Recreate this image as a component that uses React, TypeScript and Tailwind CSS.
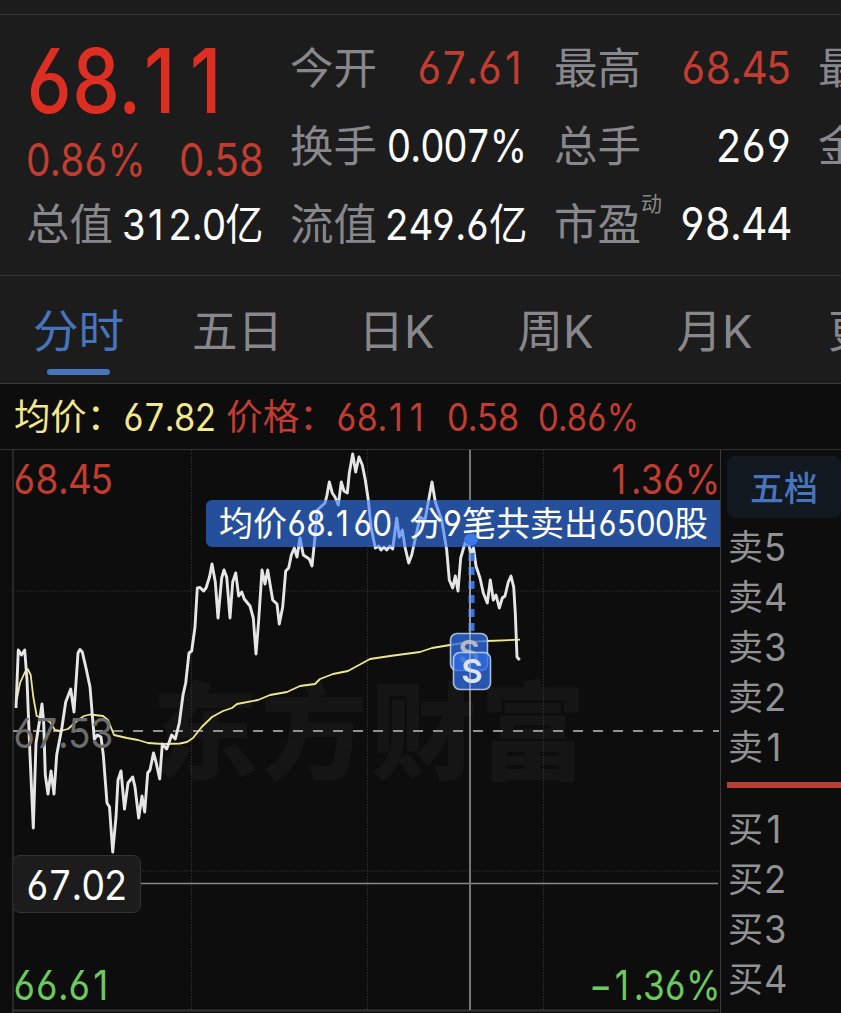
import { useLayoutEffect, useRef, useState, type ReactNode } from "react";
import clsx from "clsx";

const font = "font-['Inter','Noto_Sans_CJK_SC',sans-serif]";
const openDigits = "[font-feature-settings:'cv03','cv04']";

/** Single line of text condensed horizontally so that it fills its box. */
function Fit({ children, className }: { children: ReactNode; className: string }) {
  const box = useRef<HTMLDivElement>(null);
  const ref = useRef<HTMLSpanElement>(null);
  const [scale, setScale] = useState(1);
  useLayoutEffect(() => {
    if (box.current && ref.current) setScale(box.current.clientWidth / ref.current.offsetWidth);
  }, []);
  return (
    <div ref={box} className={clsx("shrink-0 whitespace-nowrap", className)}>
      <span ref={ref} className="inline-block origin-left" style={{ transform: `scaleX(${scale})` }}>
        {children}
      </span>
    </div>
  );
}

/** Digits on an even pitch, with a narrow decimal point. */
function Digits({ value }: { value: string }) {
  return (
    <>
      {value.split("").map((c, i) => (
        <span
          key={i}
          className={clsx(
            "inline-block text-center",
            c >= "0" && c <= "9" && "w-[0.61em]",
            c === "1" && "pr-[0.06em]",
            c === "." && "w-[0.27em]",
          )}
        >
          {c}
        </span>
      ))}
    </>
  );
}

function Stat({ label, sup, value, width, tone = "text-white", size = "text-[45px]" }: {
  label: string; sup?: string; value?: string; width?: string; tone?: string; size?: string;
}) {
  return (
    <div className="flex h-[78px] items-center justify-between leading-[78px]">
      <span className="relative -ml-[1px] shrink-0 whitespace-nowrap text-[43.5px] font-normal text-[#88888c]">
        {label}
        {sup && <sup className="absolute -top-[20px] left-full text-[21px] leading-[78px]">{sup}</sup>}
      </span>
      {value && width && (
        <Fit className={clsx(width, tone, size)}>
          <Digits value={value} />
        </Fit>
      )}
    </div>
  );
}

const pricePoints =
  "16,708 18.3,650 21.5,655 24.7,650 27,680 30,755 33.3,828 36,743 40,718 42,704 43.7,723 45.3,775 48,794 51,771 54,794 56.7,755 62,727 65.7,702 70.7,689 74,712 78,653 80,649.5 82.3,652 86,668 90,687 94.3,739 97.5,735 101,737 103.3,755 107,803 109.5,807 112.7,852 116,817 118,780 121,771 124.5,809 128,783 132.7,777 135,787 138.7,818 142,796 144.7,812 147.7,773 150,770 153.5,753 156,762 159.7,779 162.3,744 166.7,749 171.7,735 175.3,739 179.3,723 183,695 185.7,683 189,653 191.7,651 195,627 197.3,588 200,587.5 203.5,591 206,588 209.5,577 212,564 215.3,582 218,618 221.7,578 224,570 226.7,577 230,618 232.7,582 235.7,573 238.7,596 241.7,592 244.3,599 250,606 253.3,618 256,654 258.7,620 262,570 265,584 267.7,570 272.7,600 277,604 279.3,624 282.7,607 285.7,571 288.7,568 291.3,555 294.3,548 297,557 300,538 303.3,555 309.3,559 312,566 314.7,540 317.3,510 325,503 327,495 329.3,482 332.3,493 335,497 338.3,505 341.3,482 344,491 347.3,493 349.3,473 352.7,454 355.7,472 359,457 362.3,465 365.3,480 368.3,500 371,527 375.3,548 378.7,546 381,550 384,547 386.7,550 390,546 392.7,549 396.7,518 399.3,537 402.3,530 405,547 408.7,563 411.7,555 415,540 420,517 425,520 428.3,502 432,482 435.3,502 441.7,520 446.7,550 449.3,580 452.7,588 455.3,576 458,591 460.7,558 465,543 469,545 470.5,553 473.5,548 476,566 480,578 483.3,593 487.3,603 490.3,580 493.3,600 496,595 499.3,608 502.3,598 505,596 508.3,582 511,576 513.7,587 515.3,613 517,657 519.7,660";

const averagePoints =
  "16.7,700 20,683 25,672 27.7,669 30.7,675 33.3,697 36.7,716 43,718 50,722 55,730 60,731 68,729 78,720 84,716 90,714.5 103,716 108,720 114,735 127,738 138,740 148,743 163,744 180,743.5 187,742 193,738 201.7,727 212,717 223,711 232,708 237,704 258,700 270,695 287,692 300,686 315,684 320,679 333,674 348,671 370,659 390,656 420,652 432,648 450,645 470,642 487,641 520,639.7";

function Marker({ x, y, letter }: { x: number; y: number; letter: string }) {
  return (
    <g transform={`translate(${x} ${y})`}>
      <rect width="37" height="37" rx="6.5" fill="#2f6ce0" fillOpacity="0.78" stroke="#c3d3f2" strokeOpacity="0.85" strokeWidth="1.6" />
      <text x="18.5" y="30.5" textAnchor="middle" fontSize="33" fontWeight="600" fill={letter} className="font-['Inter',sans-serif]">S</text>
    </g>
  );
}

function Chart() {
  return (
    <div className="relative h-[563px] w-[721px] shrink-0 overflow-hidden border-r border-[#3a3a3a]">
      <svg width="720" height="563" viewBox="0 450 720 563" className="block">
        <defs>
          <linearGradient id="priceStroke" gradientUnits="userSpaceOnUse" x1="0" y1="450" x2="0" y2="550">
            <stop offset="0.5" stopColor="#e6e6e6" />
            <stop offset="0.5" stopColor="#7ba6f6" />
            <stop offset="0.97" stopColor="#7ba6f6" />
            <stop offset="0.97" stopColor="#e6e6e6" />
          </linearGradient>
        </defs>
        <text x="152" y="771" fontSize="106" fontWeight="900" textLength="434" fill="#151515" className="font-['Noto_Sans_CJK_SC',sans-serif]">东方财富</text>
        <path d="M13 450V1013" stroke="#292929" strokeWidth="2" />
        <path d="M12 1010.5H719" stroke="#343434" strokeWidth="2" />
        <path d="M191.5 450V1010M367.5 450V1010M543.5 450V1010M13 591H719M13 871H719" stroke="#303030" strokeDasharray="1.5 1.5" strokeWidth="1.2" />
        <path d="M13 731H719" stroke="#929292" strokeWidth="2" strokeDasharray="10 10" />
        <path d="M140 883.5H718" stroke="#8a8a8a" strokeWidth="1.4" />
        <path d="M470 450V1010" stroke="#777" strokeWidth="2" />
        <path d="M720 500H212a6 6 0 0 0-6 6V541a6 6 0 0 0 6 6H720Z" fill="#264f9b" />
        <polyline points={averagePoints} fill="none" stroke="#f1e68c" strokeWidth="1.8" strokeLinejoin="round" />
        <polyline points={pricePoints} fill="none" stroke="url(#priceStroke)" strokeWidth="2.9" strokeLinejoin="round" />
        <path d="M471.5 553V633" stroke="#3a73db" strokeWidth="6" strokeDasharray="8 6" />
        <ellipse cx="471" cy="539.5" rx="7" ry="6" fill="#3b78e8" />
        <Marker x={450.5} y={633.5} letter="#b4b8c2" />
        <Marker x={453.5} y={652.5} letter="#dfe3ec" />
        <path d="M470 547V690" stroke="#c8c8c8" strokeOpacity="0.45" strokeWidth="2" />
      </svg>
      <div className="absolute left-[13px] top-[6px] text-[41px] leading-[46px] text-[#c33c30]">
        <Fit className="w-[100px]"><Digits value="68.45" /></Fit>
      </div>
      <div className="absolute right-0 top-[6px] text-[41px] leading-[46px] text-[#c33c30]">
        <Fit className="w-[111px]"><Digits value="1.36%" /></Fit>
      </div>
      <div className="absolute left-[13px] top-[260px] text-[41px] leading-[46px] text-[#6c6c6c]">
        <Fit className="w-[100px]"><Digits value="67.53" /></Fit>
      </div>
      <div className="absolute left-[13px] top-[512px] text-[41px] leading-[46px] text-[#6cc95b]">
        <Fit className="w-[100px]"><Digits value="66.61" /></Fit>
      </div>
      <div className="absolute right-0 top-[512px] text-[41px] leading-[46px] text-[#6cc95b]">
        <Fit className="w-[131px]"><Digits value="−1.36%" /></Fit>
      </div>
      <div className="absolute left-[12px] top-[405px] flex h-[58px] w-[129px] items-center justify-center rounded-lg border border-[#333] bg-[#1c1c1c] pt-[2px] text-[41px] leading-none text-white">
        <Fit className="w-[101px]"><Digits value="67.02" /></Fit>
      </div>
      <div className="absolute left-[219px] top-[50px] flex text-[34px] leading-[47px] text-white">
        <Fit className="w-[68px]">均价</Fit>
        <Fit className="w-[104px] text-[36px]"><Digits value="68.160" /></Fit>
        <Fit className="ml-[18px] w-[34px]">分</Fit>
        <Fit className="w-[19px] text-[36px]">9</Fit>
        <Fit className="w-[136px]">笔共卖出</Fit>
        <Fit className="w-[76px] text-[36px]"><Digits value="6500" /></Fit>
        <Fit className="w-[34px]">股</Fit>
      </div>
    </div>
  );
}

function Level({ side, n }: { side: string; n: number }) {
  return (
    <div className="flex h-[50px] items-center gap-px pl-[7px] leading-[50px] text-[#929294]">
      <span className="text-[35px]">{side}</span>
      <Fit className="w-[22px] text-[38px]"><Digits value={String(n)} /></Fit>
    </div>
  );
}

const tabs = ["分时", "五日", "日K", "周K", "月K", "更多"];

export default function App() {
  return (
    <div className={clsx("flex h-[1013px] w-[841px] flex-col overflow-hidden bg-[#1c1c1c]", font, openDigits)}>
      <div className="h-[15px] shrink-0 border-b border-[#333]" />
      <section className="flex h-[261px] shrink-0 gap-[28px] border-b border-[#333] pl-[27px] pt-[14px]">
        <div className="w-[236px] shrink-0">
          <div className="h-[104px] text-[89px] font-[550] leading-[104px] text-[#dc2f22]">
            <Fit className="-ml-px w-[205px]"><Digits value="68.11" /></Fit>
          </div>
          <div className="flex h-[52px] justify-between text-[45px] leading-[54px] text-[#c33c30]">
            <Fit className="-ml-px w-[120px]"><Digits value="0.86%" /></Fit>
            <Fit className="w-[84px]"><Digits value="0.58" /></Fit>
          </div>
          <Stat label="总值" value="312.0亿" width="w-[141px]" size="text-[43px]" />
        </div>
        <div className="w-[236px] shrink-0">
          <Stat label="今开" value="67.61" width="w-[110px]" tone="text-[#c33c30]" />
          <Stat label="换手" value="0.007%" width="w-[140px]" />
          <Stat label="流值" value="249.6亿" width="w-[142px]" size="text-[43px]" />
        </div>
        <div className="w-[236px] shrink-0">
          <Stat label="最高" value="68.45" width="w-[110px]" tone="text-[#c33c30]" />
          <Stat label="总手" value="269" width="w-[75px]" />
          <Stat label="市盈" sup="动" value="98.44" width="w-[111px]" />
        </div>
        <div className="w-[236px] shrink-0">
          <Stat label="最低" />
          <Stat label="金额" />
        </div>
      </section>
      <nav className="-ml-px flex h-[108px] shrink-0 border-b border-[#3a3a3a] text-[45.5px] font-normal leading-[112px] text-[#88888c]">
        {tabs.map((tab, i) => (
          <div key={tab} className={clsx("relative w-[159px] shrink-0 text-center", i === 0 && "text-[#4674bd]")}>
            {tab}
            {i === 0 && <div className="absolute bottom-[8px] left-[48px] h-[6px] w-[63px] rounded-full bg-[#4674bd]" />}
          </div>
        ))}
      </nav>
      <div className="flex h-[66px] shrink-0 border-b border-[#333] bg-[#0d0d0d] pl-[14px] text-[36px] leading-[66px] text-[#f4e98a]">
        <Fit className="w-[109px]">均价：</Fit>
        <Fit className="w-[93px] text-[38px]"><Digits value="67.82" /></Fit>
        <div className="flex pl-[10px] text-[#c33c30]">
          <Fit className="w-[110px]">价格：</Fit>
          <Fit className="w-[92px] text-[38px]"><Digits value="68.11" /></Fit>
          <Fit className="ml-[19px] w-[72px] text-[38px]"><Digits value="0.58" /></Fit>
          <Fit className="ml-[19px] w-[101px] text-[38px]"><Digits value="0.86%" /></Fit>
        </div>
      </div>
      <main className="flex h-[563px] shrink-0 bg-[#0d0d0d]">
        <Chart />
        <aside className="min-w-0 flex-1 overflow-hidden pt-[6px]">
          <div className="ml-[6px] h-[62px] rounded-lg bg-[#111820] text-center text-[34px] font-medium leading-[65px] text-[#4674bd]">五档</div>
          <div className="pt-[4px]">
            {[5, 4, 3, 2, 1].map((n) => <Level key={n} side="卖" n={n} />)}
          </div>
          <div className="mb-[16px] ml-[6px] mt-[10px] h-[6px] bg-[#b83d37]" />
          {[1, 2, 3, 4, 5].map((n) => <Level key={n} side="买" n={n} />)}
        </aside>
      </main>
    </div>
  );
}
